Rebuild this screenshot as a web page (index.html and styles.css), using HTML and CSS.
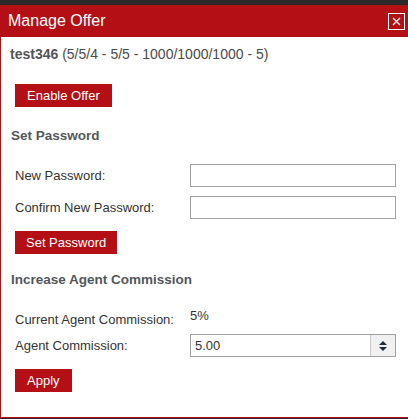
FILE: index.html
```html
<!DOCTYPE html>
<html>
<head>
<meta charset="utf-8">
<link rel="stylesheet" href="styles.css">
</head>
<body>
<div class="dialog">
  <div class="header">
    <span class="title">Manage Offer</span>
    <span class="close">
      <svg width="15" height="15" viewBox="0 0 15 15"><path d="M4 4L11 11M11 4L4 11" stroke="#fff" stroke-width="1.2" fill="none"/></svg>
    </span>
  </div>
  <div class="content">
    <div class="info"><b>test346</b> (5/5/4 - 5/5 - 1000/1000/1000 - 5)</div>
    <button class="btn btn-enable">Enable Offer</button>

    <div class="section-title st-pass">Set Password</div>
    <div class="form-row row-first">
      <label class="lbl">New Password:</label>
      <div class="field"></div>
    </div>
    <div class="form-row row-second">
      <label class="lbl">Confirm New Password:</label>
      <div class="field"></div>
    </div>
    <button class="btn btn-setpass">Set Password</button>

    <div class="section-title st-comm">Increase Agent Commission</div>
    <div class="form-row row-current">
      <label class="lbl">Current Agent Commission:</label>
      <span class="value">5%</span>
    </div>
    <div class="form-row row-agent">
      <label class="lbl">Agent Commission:</label>
      <div class="field number">
        <span class="num-val">5.00</span>
        <span class="spin">
          <svg width="10" height="14" viewBox="0 0 10 14"><path d="M1 6L5 2L9 6Z" fill="#1f2d3a"/><path d="M1 8L5 12L9 8Z" fill="#1f2d3a"/></svg>
        </span>
      </div>
    </div>
    <button class="btn btn-apply">Apply</button>
  </div>
</div>
</body>
</html>
```
FILE: styles.css
```css
html, body {
  margin: 0;
  height: 419px;
  overflow: hidden;
}
body {
  background: #2a2a2a;
  font-family: "Liberation Sans", Arial, sans-serif;
  color: #333;
}
.dialog {
  margin-top: 5px;
  height: 413px;
  box-sizing: border-box;
  background: #fff;
  border-left: 1px solid #b30f15;
  border-bottom: 1px solid #b30f15;
  display: flex;
  flex-direction: column;
}
.header {
  background: #b30f15;
  height: 32px;
  display: flex;
  align-items: center;
  justify-content: space-between;
  padding: 0 3px 0 7px;
}
.title {
  color: #fff;
  font-size: 16px;
}
.close {
  width: 17px;
  height: 17px;
  box-sizing: border-box;
  border: 1px solid #fff;
  display: flex;
  align-items: center;
  justify-content: center;
}
.content {
  display: flex;
  flex-direction: column;
  align-items: flex-start;
}
.info {
  margin: 9px 0 0 9px;
  font-size: 14px;
  line-height: 16px;
  color: #4a4a4a;
}
.info b {
  color: #555;
}
.btn {
  background: #b30f15;
  color: #fff;
  border: none;
  font-family: "Liberation Sans", Arial, sans-serif;
  font-size: 13px;
  height: 23px;
  line-height: 23px;
  padding: 0 12px;
  margin-left: 14px;
}
.btn-enable { margin-top: 22px; }
.btn-setpass { margin-top: 12px; padding: 0 11px; }
.btn-apply { margin-top: 12px; padding: 0 12px; }
.section-title {
  margin-left: 10px;
  font-size: 13.5px;
  font-weight: bold;
  line-height: 16px;
  color: #52575c;
}
.st-pass { margin-top: 21px; }
.st-comm { margin-top: 18px; }
.form-row {
  display: grid;
  grid-template-columns: 175px 206px;
  align-items: center;
  margin-left: 14px;
}
.lbl {
  font-size: 13px;
  color: #333;
}
.field {
  height: 23px;
  box-sizing: border-box;
  border: 1px solid #a0a0a0;
  background: #fff;
}
.row-first { margin-top: 20px; }
.row-second { margin-top: 9px; }
.row-current {
  margin-top: 23px;
  height: 16px;
}
.row-current .value {
  font-size: 13px;
  color: #333;
  align-self: start;
  margin-top: -3px;
}
.row-agent { margin-top: 7px; }
.number {
  display: flex;
  align-items: center;
  justify-content: space-between;
}
.num-val {
  font-size: 13px;
  color: #333;
  padding-left: 4px;
}
.spin {
  width: 25px;
  height: 100%;
  box-sizing: border-box;
  border-left: 1px solid #c8c8c8;
  background: #f0f0f0;
  display: flex;
  align-items: center;
  justify-content: center;
}
```
